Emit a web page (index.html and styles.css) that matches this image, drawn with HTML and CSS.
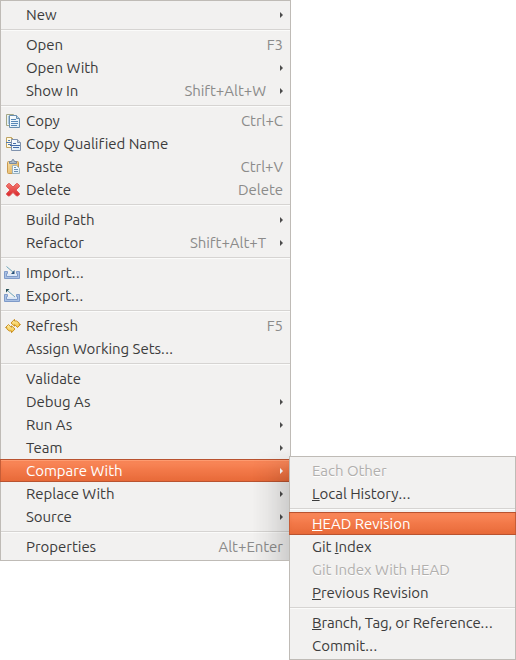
FILE: index.html
```
<!DOCTYPE html>
<html lang="en">
<head>
<meta charset="utf-8">
<title>Context menu</title>
<link rel="stylesheet" href="styles.css">
</head>
<body>
<svg class="defs" width="0" height="0">
  <defs>
    <linearGradient id="paper" x2="1" y2="1"><stop stop-color="#fff"/><stop offset="1" stop-color="#d9ecf8"/></linearGradient>
    <linearGradient id="board" x2="1" y2="1"><stop stop-color="#f8dfa5"/><stop offset="1" stop-color="#dda952"/></linearGradient>
    <linearGradient id="red" x2="0" y2="1"><stop stop-color="#f47b70"/><stop offset="1" stop-color="#d8252b"/></linearGradient>
    <linearGradient id="gold" x2="0" y2="1"><stop stop-color="#fff3b0"/><stop offset="1" stop-color="#f2bd35"/></linearGradient>
    <g id="tray"><path d="M.5 6.500h3v2h-1v3h11v-3h-1v-2h3v7H.5z" fill="#a9c0e3" stroke="#7f9bc9"/><path d="M3 9h10v2H3z" fill="#dce8f7"/></g>
  </defs>
</svg>
<nav class="menu main">
  <div class="row"><span class="label">New</span><i class="arrow"></i></div>
  <hr>
  <div class="row"><span class="label">Open</span><span class="key">F3</span></div>
  <div class="row"><span class="label">Open With</span><i class="arrow"></i></div>
  <div class="row"><span class="label">Show In</span><span class="key">Shift+Alt+W</span><i class="arrow"></i></div>
  <hr>
  <div class="row"><svg class="icon" viewBox="0 0 16 16"><path d="M1.500 1.500h7v11h-7z" fill="#e9f3f4" stroke="#a4a785"/><path d="M3 4h2M3 6h2M3 8h2M3 10h2" stroke="#6e9bc7"/><path d="M4.500 2.500h7l3 3v9h-10z" fill="url(#paper)" stroke="#688eaf"/><path d="M11.500 2.500v3h3" fill="#b9d2e2" stroke="#688eaf"/><path d="M6 6.500h5M6 8.500h7M6 10.500h7M6 12.500h6" stroke="#5888b7"/></svg><span class="label">Copy</span><span class="key">Ctrl+C</span></div>
  <div class="row"><svg class="icon" viewBox="0 0 16 16"><path d="M1.500 1.500h5l2 2v8h-7z" fill="#fff9e4" stroke="#c0a461"/><path d="M6.500 1.500v2h2" fill="none" stroke="#c0a461"/><path d="M1 6.500h6M3 4.500h2M3 8.500h3" stroke="#5079b2"/><path d="M6.500 3.500h6l3 3v8h-9z" fill="url(#paper)" stroke="#8092ad"/><path d="M12.500 3.500v3h3" fill="#c5d1df" stroke="#8092ad"/><path d="M5 9.500h10M8 7.500h3M8 11.500h6" stroke="#446da9"/></svg><span class="label">Copy Qualified Name</span></div>
  <div class="row"><svg class="icon" viewBox="0 0 16 16"><rect x="2.500" y="2.500" width="11" height="12" rx="1" fill="url(#board)" stroke="#c99a50"/><path d="M4.500 4.500v-2h2l1-2h1l1 2h2v2z" fill="#aabac9" stroke="#7889a0"/><path d="M7.500 6.500h4l3 3v5h-7z" fill="url(#paper)" stroke="#9db4bf"/><path d="M9 8.500h2M9 10.500h4M9 12.500h4" fill="none" stroke="#6e91b2"/></svg><span class="label">Paste</span><span class="key">Ctrl+V</span></div>
  <div class="row"><svg class="icon" viewBox="0 0 16 16"><path d="M4.500 1.500 8 5l3.500-3.500h1l2 2v1L11 8l3.500 3.500v1l-2 1.500h-1L8 10.500 4.500 14h-1l-2-1.500v-1L5 8 1.500 4.500v-1l2-2z" fill="url(#red)" stroke="#e05a58"/></svg><span class="label">Delete</span><span class="key">Delete</span></div>
  <hr>
  <div class="row"><span class="label">Build Path</span><i class="arrow"></i></div>
  <div class="row"><span class="label">Refactor</span><span class="key">Shift+Alt+T</span><i class="arrow"></i></div>
  <hr>
  <div class="row"><svg class="icon tray" viewBox="0 0 16 16"><use href="#tray"/><path d="m2.500 1.500 7 6" stroke="#6ea6bb"/><path d="M10.500 5v4H7z" fill="#244f79"/></svg><span class="label">Import<span class="dots">...</span></span></div>
  <div class="row"><svg class="icon tray" viewBox="0 0 16 16"><use href="#tray"/><path d="m4 3 7 6" stroke="#6ea6bb"/><path d="M2 1h3.500L2 4.500z" fill="#244f55"/></svg><span class="label">Export<span class="dots">...</span></span></div>
  <hr>
  <div class="row"><svg class="icon" viewBox="0 0 16 16"><g fill="url(#gold)" stroke="#c68a18" stroke-width=".9" stroke-linejoin="round"><path d="M6 5 9.500 1.300v1.700h2.200L14.200 5v1.500h1.300L12.500 9.500 9.800 6.700h-.3v1.500z"/><path d="M10 11 6.500 14.700V13H4.300L1.800 11V9.500H.5l3-3 2.700 2.800h.3V7.800z"/></g></svg><span class="label">Refresh</span><span class="key">F5</span></div>
  <div class="row"><span class="label">Assign Working Sets<span class="dots">...</span></span></div>
  <hr>
  <div class="row"><span class="label">Validate</span></div>
  <div class="row"><span class="label">Debug As</span><i class="arrow"></i></div>
  <div class="row"><span class="label">Run As</span><i class="arrow"></i></div>
  <div class="row"><span class="label">Team</span><i class="arrow"></i></div>
  <div class="row active"><span class="label">Compare With</span><i class="arrow"></i></div>
  <div class="row"><span class="label">Replace With</span><i class="arrow"></i></div>
  <div class="row"><span class="label">Source</span><i class="arrow"></i></div>
  <hr>
  <div class="row"><span class="label">Properties</span><span class="key">Alt+Enter</span></div>
  <div class="shade"></div>
</nav>
<nav class="menu sub">
  <div class="row disabled"><span class="label">Each Other</span></div>
  <div class="row"><span class="label"><u>L</u>ocal History<span class="dots">...</span></span></div>
  <hr>
  <div class="row active"><span class="label"><u>H</u>EAD Revision</span></div>
  <div class="row"><span class="label">Git <u>I</u>ndex</span></div>
  <div class="row disabled"><span class="label">Git Index With HEAD</span></div>
  <div class="row"><span class="label"><u>P</u>revious Revision</span></div>
  <hr>
  <div class="row"><span class="label tight"><u>B</u>ranch, Tag, or Reference<span class="dots">...</span></span></div>
  <div class="row"><span class="label">Commit<span class="dots">...</span></span></div>
</nav>
</body>
</html>
```
FILE: styles.css
```
* { box-sizing: border-box; }
body {
  margin: 0;
  width: 516px;
  height: 660px;
  position: relative;
  overflow: hidden;
  background: #fff;
  font: 15px/23px Ubuntu, "Noto Sans", "Open Sans", sans-serif;
  font-variant-ligatures: none;
  letter-spacing: -0.04px;
  color: #3c3c3c;
}
.defs { position: absolute; }
.menu {
  background: #f2f1f0;
  border: 1px solid #bfbbb6;
  padding: 2px 0;
}
.main { width: 291px; height: 561px; position: relative; }
.sub { position: absolute; left: 289px; top: 456px; width: 227px; height: 204px; }
.row {
  height: 23px;
  display: flex;
  align-items: center;
  padding: 0 7px 0 25px;
  white-space: pre;
}
.sub .row { padding-left: 22px; }
.label { margin-right: auto; }
.tight { letter-spacing: -0.16px; }
.dots { letter-spacing: 0.5px; }
.key { color: #8b8b8a; }
.icon { width: 16px; height: 16px; margin: 0 5px 0 -21px; flex: none; }
.tray { margin: 0 6px 0 -22px; }
.arrow {
  width: 0;
  height: 0;
  border: solid transparent;
  border-width: 3px 0 3px 3px;
  border-left-color: #4c4c4c;
}
.key + .arrow { margin-left: 14px; }
hr {
  height: 7px;
  margin: 0;
  border: 0;
  background: linear-gradient(transparent 3px, #d6d4d2 3px 4px, #fbfbfa 4px 5px, transparent 5px);
}
.active {
  margin: 0 -1px;
  padding-left: 26px;
  padding-right: 8px;
  color: #fff;
  background: linear-gradient(#fb8b5d, #f27848 50%, #e86b3a);
  border: solid #b95330;
  border-width: 1px 0;
  box-shadow: inset 1px 0 #c65d37, inset 0 1px #fd9b70, inset 0 0 4px #e7663466;
}
.sub .active { padding-left: 23px; box-shadow: inset 1px 0 #c65d37, inset -1px 0 #c65d37, inset 0 0 4px #e7663466; }
.active .arrow { border-left-color: #fff; }
.disabled { color: #b1afad; text-shadow: 0 1px #fff; }
u { text-decoration: underline 1px; text-underline-offset: 1px; text-decoration-skip-ink: none; }
.shade {
  position: absolute;
  right: 0;
  top: 448px;
  bottom: 0;
  width: 38px;
  background: linear-gradient(90deg, transparent, #0000000a 40%, #00000026);
  mask-image: linear-gradient(transparent, #000 35px);
}
```
